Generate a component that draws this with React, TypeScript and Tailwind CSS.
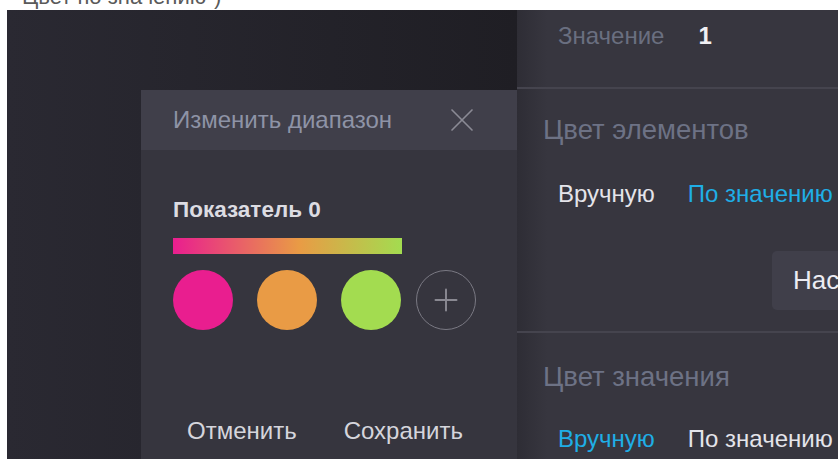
import { X, Plus } from 'lucide-react'

const swatches = ['#e91e8f', '#e99b45', '#a3dc50']

function ModeSwitch({ active }: { active: 'manual' | 'value' }) {
  const on = 'text-[#1faee6]'
  const off = 'text-[#e4e4ea]'
  return (
    <div className="flex pl-[41px] text-[24px] leading-none">
      <span className={active === 'manual' ? on : off}>Вручную</span>
      <span className={`ml-[33px] whitespace-nowrap ${active === 'value' ? on : off}`}>По значению</span>
    </div>
  )
}

export default function App() {
  return (
    <div className="w-[838px] h-[459px] bg-white overflow-hidden font-['Liberation_Sans',Arial,sans-serif]">
      {/* caption above the preview, cut by the frame */}
      <div className="h-[10px] overflow-hidden pl-[22px]">
        <p className="text-[22px] leading-none -mt-[14px] text-[#5a5a5a] whitespace-nowrap">Цвет по значению")</p>
      </div>

      <div className="ml-[7px] h-[449px] flex">
        {/* backdrop with the range dialog */}
        <div className="w-[510px] shrink-0 flex flex-col pt-[80px] pl-[134px] bg-[linear-gradient(90deg,#2a2932,#1f1e24)]">
          <div className="flex-1 flex flex-col bg-[#36353e]">
            <div className="h-[60px] shrink-0 flex items-center justify-between pl-[32px] pr-[35px] bg-[#403f4a]">
              <span className="text-[24px] text-[#8e93a6]">Изменить диапазон</span>
              <X size={40} strokeWidth={1} className="text-[#8b8a95]" />
            </div>
            <div className="pl-[32px] pt-[49px]">
              <p className="text-[22.5px] leading-none font-bold text-[#dcdce2]">Показатель 0</p>
              <div className="mt-[16.5px] w-[229px] h-[16px] bg-[linear-gradient(90deg,#e91e8f,#e99b45_55%,#a3dc50)]" />
              <div className="mt-[16px] flex items-center gap-[24px]">
                {swatches.map((c, i) => (
                  <div key={i} className="w-[60px] h-[60px] rounded-full" style={{ backgroundColor: c }} />
                ))}
                <button className="-ml-[9px] w-[60px] h-[60px] rounded-full border-[1.5px] border-[#7a7983] flex items-center justify-center text-[#8a8992]">
                  <Plus size={36} strokeWidth={1.3} />
                </button>
              </div>
              <div className="mt-[89px] flex pl-[14px] text-[24px] leading-none text-[#d5d5dc]">
                <span>Отменить</span>
                <span className="ml-[47px]">Сохранить</span>
              </div>
            </div>
          </div>
        </div>

        {/* settings panel */}
        <div className="flex-1 bg-[#37363f] bg-[linear-gradient(90deg,#2e2d35,#37363f_30px)]">
          <div className="h-[79px] border-b-2 border-[#45444e] pl-[41px] pt-[14px] flex items-start text-[24px] leading-none">
            <span className="text-[#6a6f80]">Значение</span>
            <span className="ml-[34px] font-bold text-[#f0f0f4]">1</span>
          </div>

          <div className="h-[244px] border-b-2 border-[#45444e] pt-[27px]">
            <p className="pl-[26px] text-[27.5px] leading-none text-[#6d7285]">Цвет элементов</p>
            <div className="mt-[38.5px]">
              <ModeSwitch active="value" />
            </div>
            <div className="mt-[45px] ml-[255px] h-[59px] rounded-l-[5px] bg-[#403f4a] pl-[21px] flex items-center text-[26px] text-[#ececf2] whitespace-nowrap overflow-hidden">
              Настроить
            </div>
          </div>

          <div className="pt-[30px]">
            <p className="pl-[26px] text-[27.5px] leading-none text-[#6d7285]">Цвет значения</p>
            <div className="mt-[36.5px]">
              <ModeSwitch active="manual" />
            </div>
          </div>
        </div>
      </div>
    </div>
  )
}
